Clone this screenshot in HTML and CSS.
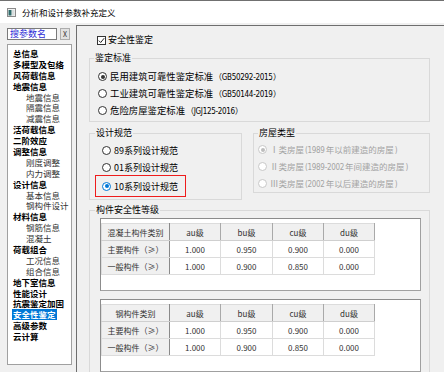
FILE: index.html
```html
<!DOCTYPE html>
<html lang="zh-CN">
<head>
    <meta charset="UTF-8">
    <meta name="viewport" content="width=device-width, initial-scale=1.0">
    <title>分析和设计参数补充定义</title>
    <link rel="stylesheet" href="styles.css">
</head>
<body>
    <div class="window">
        <div class="titlebar">
            <svg class="app-icon" width="9" height="9" viewBox="0 0 9 9">
                <rect x="0.5" y="0.5" width="8" height="8" fill="#f4f4f4" stroke="#8a8a8a"/>
                <rect x="1.5" y="2" width="3" height="5.5" fill="#2e6b6b"/>
                <rect x="5" y="2" width="2.5" height="5.5" fill="#d8dede"/>
            </svg>
            <span class="title">分析和设计参数补充定义</span>
        </div>

        <div class="main">
            <aside class="sidebar">
                <div class="search">
                    <div class="search-input">搜参数名</div>
                    <button class="search-clear">X</button>
                </div>
                <ul class="tree">
                    <li class="top">总信息</li>
                    <li class="top">多模型及包络</li>
                    <li class="top">风荷载信息</li>
                    <li class="top">地震信息</li>
                    <li class="sub">地震信息</li>
                    <li class="sub">隔震信息</li>
                    <li class="sub">减震信息</li>
                    <li class="top">活荷载信息</li>
                    <li class="top">二阶效应</li>
                    <li class="top">调整信息</li>
                    <li class="sub">刚度调整</li>
                    <li class="sub">内力调整</li>
                    <li class="top">设计信息</li>
                    <li class="sub">基本信息</li>
                    <li class="sub">钢构件设计</li>
                    <li class="top">材料信息</li>
                    <li class="sub">钢筋信息</li>
                    <li class="sub">混凝土</li>
                    <li class="top">荷载组合</li>
                    <li class="sub">工况信息</li>
                    <li class="sub">组合信息</li>
                    <li class="top">地下室信息</li>
                    <li class="top">性能设计</li>
                    <li class="top">抗震鉴定加固</li>
                    <li class="top"><span class="selected">安全性鉴定</span></li>
                    <li class="top">高级参数</li>
                    <li class="top">云计算</li>
                </ul>
            </aside>

            <section class="content">
                <label class="check">
                    <span class="checkbox">
                        <svg width="7" height="7" viewBox="0 0 7 7">
                            <path d="M0.8 3.6 L2.7 5.5 L6.2 1.2" fill="none" stroke="#222" stroke-width="1"/>
                        </svg>
                    </span>
                    安全性鉴定
                </label>

                <fieldset class="group group-std">
                    <legend>鉴定标准</legend>
                    <div class="radio checked"><span class="dot"></span><span class="label">民用建筑可靠性鉴定标准<span class="num">（GB50292-2015）</span></span></div>
                    <div class="radio"><span class="dot"></span><span class="label">工业建筑可靠性鉴定标准<span class="num">（GB50144-2019）</span></span></div>
                    <div class="radio"><span class="dot"></span><span class="label">危险房屋鉴定标准<span class="num">（JGJ125-2016）</span></span></div>
                </fieldset>

                <div class="group-row">
                    <fieldset class="group group-code">
                        <legend>设计规范</legend>
                        <div class="radio"><span class="dot"></span><span class="label">89系列设计规范</span></div>
                        <div class="radio"><span class="dot"></span><span class="label">01系列设计规范</span></div>
                        <div class="radio checked focus marked"><span class="dot"></span><span class="label">10系列设计规范</span></div>
                    </fieldset>
                    <fieldset class="group group-house disabled">
                        <legend>房屋类型</legend>
                        <div class="radio checked"><span class="dot"></span><span class="label">Ⅰ类房屋<span class="num">(1989</span>年以前建造的房屋<span class="num">)</span></span></div>
                        <div class="radio"><span class="dot"></span><span class="label">Ⅱ类房屋<span class="num">(1989-2002</span>年间建造的房屋<span class="num">)</span></span></div>
                        <div class="radio"><span class="dot"></span><span class="label">Ⅲ类房屋<span class="num">(2002</span>年以后建造的房屋<span class="num">)</span></span></div>
                    </fieldset>
                </div>

                <fieldset class="group group-grade">
                    <legend>构件安全性等级</legend>
                    <div class="grid-panel">
                        <table class="grid">
                            <tr><th>混凝土构件类别</th><th>au级</th><th>bu级</th><th>cu级</th><th>du级</th></tr>
                            <tr><th>主要构件（≥）</th><td>1.000</td><td>0.950</td><td>0.900</td><td>0.000</td></tr>
                            <tr><th>一般构件（≥）</th><td>1.000</td><td>0.900</td><td>0.850</td><td>0.000</td></tr>
                        </table>
                    </div>
                    <div class="grid-panel">
                        <table class="grid">
                            <tr><th>钢构件类别</th><th>au级</th><th>bu级</th><th>cu级</th><th>du级</th></tr>
                            <tr><th>主要构件（≥）</th><td>1.000</td><td>0.950</td><td>0.900</td><td>0.000</td></tr>
                            <tr><th>一般构件（≥）</th><td>1.000</td><td>0.900</td><td>0.850</td><td>0.000</td></tr>
                        </table>
                    </div>
                </fieldset>
            </section>
        </div>
    </div>
</body>
</html>
```

FILE: styles.css
```css
:root {
    --bg: #f0f0f0;
    --frame: #6e6e6e;
    --group-line: #d9d9d9;
    --text: #000;
    --muted: #a3a3a3;
    --accent: #0078d7;
}

* {
    box-sizing: border-box;
    margin: 0;
    padding: 0;
}

body {
    width: 444px;
    height: 372px;
    overflow: hidden;
    background: var(--bg);
    font-family: "Noto Sans CJK SC", "Noto Sans", sans-serif;
    font-size: 9px;
    color: var(--text);
}

.window {
    height: 372px;
    border-top: 1px solid #707070;
    display: flex;
    flex-direction: column;
}

/* title bar */
.titlebar {
    height: 22px;
    background: #fff;
    display: flex;
    align-items: center;
    gap: 6px;
    padding-left: 7px;
}

.title {
    font-size: 8.5px;
    line-height: 10px;
}

.main {
    flex: 1;
    display: flex;
    min-height: 0;
}

/* left navigation */
.sidebar {
    width: 76px;
    padding: 5px 0 0 7px;
}

.search {
    display: flex;
    gap: 3px;
    height: 12px;
}

.search-input {
    width: 50px;
    height: 12px;
    background: #fff;
    border: 1px solid #7a7a7a;
    color: #2b2bd6;
    line-height: 10px;
    padding-left: 2px;
}

.search-clear {
    width: 10px;
    height: 12px;
    border: 1px solid #adadad;
    background: #e1e1e1;
    font-family: inherit;
    font-size: 7px;
    line-height: 10px;
    color: #333;
}

.tree {
    list-style: none;
    margin-top: 4px;
    width: 65px;
    height: 321px;
    background: #fff;
    border: 1px solid #a0a0a0;
    padding: 3px 0 0 5px;
    font-size: 8.5px;
    line-height: 10.9px;
    white-space: nowrap;
}

.tree li {
    height: 10.9px;
}

.tree .top {
    font-weight: bold;
}

.tree .sub {
    padding-left: 13px;
    color: #333;
}

.tree .selected {
    display: inline-block;
    background: var(--accent);
    color: #fff;
    padding: 0 1px;
    margin-left: -1px;
}

/* right panel */
.content {
    flex: 1;
    margin-top: 2px;
    border-left: 1px solid var(--frame);
    border-top: 1px solid var(--frame);
    padding: 9px 14px 0 12px;
}

.check {
    display: flex;
    align-items: center;
    gap: 2px;
    margin-left: 8px;
    height: 10px;
    line-height: 10px;
}

.checkbox {
    width: 9px;
    height: 9px;
    border: 1px solid #333;
    background: #fff;
    display: flex;
    align-items: center;
    justify-content: center;
}

.group {
    border: 1px solid var(--group-line);
    min-width: 0;
}

.group legend {
    line-height: 10px;
    padding: 0 1px;
}

.radio {
    display: flex;
    align-items: center;
    gap: 2px;
    height: 17px;
    white-space: nowrap;
}

.radio .label {
    line-height: 11px;
}

.radio .num {
    font-family: "Liberation Sans Narrow", "DejaVu Sans Condensed", "Liberation Sans", sans-serif;
    font-stretch: condensed;
    font-size: 8px;
    letter-spacing: -0.3px;
    margin: 0 1px;
}

.radio .dot {
    width: 9px;
    height: 9px;
    border: 1px solid #333;
    border-radius: 50%;
    background: #fff;
    display: flex;
    align-items: center;
    justify-content: center;
    margin-right: 1px;
}

.radio.checked .dot::after {
    content: "";
    width: 4px;
    height: 4px;
    border-radius: 50%;
    background: #333;
}

.radio.focus .dot {
    border-color: var(--accent);
}

.radio.focus .dot::after {
    background: var(--accent);
}

.radio.marked {
    width: max-content;
    outline: 1px solid #ee1c1c;
    margin-left: -6px;
    padding: 0 7px 0 6px;
    height: 20px;
}

.disabled .radio {
    color: var(--muted);
    font-size: 8.5px;
    gap: 0;
}

.disabled .radio .dot {
    border-color: #c8c8c8;
    margin-right: 3px;
}

.disabled .radio.checked .dot::after {
    background: #bdbdbd;
}

.group-std {
    margin-top: 8px;
    padding: 5px 0 2px 8px;
}

.group-std legend {
    margin-left: -4px;
}

.group-std .radio {
    font-size: 9.4px;
}

.group-row {
    display: flex;
    align-items: flex-start;
    gap: 11px;
    margin-top: 6px;
}

.group-code {
    width: 153px;
    padding: 4px 0 3px 12px;
}

.group-code legend {
    margin-left: -7px;
}

.group-house {
    flex: 1;
    padding: 3px 0 0 4px;
}

.group-grade {
    margin-top: 5px;
    padding: 3px 8px 0 10px;
    height: 180px;
}

.group-grade legend {
    margin-left: -5px;
}

/* tables */
.grid-panel {
    background: #fff;
    border: 1px solid #a0a0a0;
    border-left-color: #8c8c8c;
    border-top-color: #8c8c8c;
    height: 73px;
    padding-top: 4px;
}

.grid-panel + .grid-panel {
    margin-top: 8px;
}

.grid {
    border-collapse: collapse;
    border: 1px solid #646464;
    table-layout: fixed;
    width: 274px;
    font-size: 8px;
    color: #333;
}

.grid th,
.grid td {
    height: 17px;
    text-align: center;
    font-weight: normal;
    padding: 0;
    border: 1px solid #dcdcdc;
}

.grid th {
    background: #f0f0f0;
}

.grid tr:first-child th {
    border-right-color: #a9a9a9;
    border-bottom-color: #cfcfcf;
}

.grid tr th:first-child {
    width: 68px;
    border-right-color: #8a8a8a;
}

.grid tr:first-child th:nth-child(3) {
    width: 52px;
}
```
